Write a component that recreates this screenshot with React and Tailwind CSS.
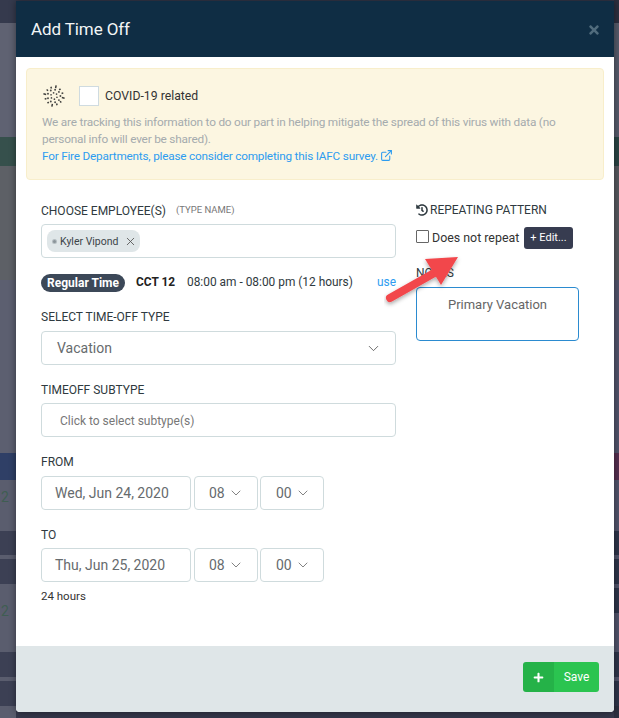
import React from 'react';
import { FaHistory, FaPlus, FaTimes } from 'react-icons/fa';
import { ChevronDown, ExternalLink, X } from 'lucide-react';

const leftBands = [
  [23, 'bg-[#353a4d]'], [114, 'bg-[#5f6272]'], [29, 'bg-[#36504c]'], [114, 'bg-[#5d6066]'], [173, 'bg-[#5c5f70]'],
  [27, 'bg-[#2f3f66]'], [51, 'bg-[#5a5d6e]', '2', 18], [24, 'bg-[#3c4054]'], [4, 'bg-[#5a5d6e]'], [25, 'bg-[#3c4054]'],
  [68, 'bg-[#5a5d6e]', '2', 28], [25, 'bg-[#3c4054]'], [4, 'bg-[#5a5d6e]'], [25, 'bg-[#3c4054]'], [12, 'bg-[#5a5d6e]'],
];

const rightBands = [
  [23, 'bg-[#2c2f3f]'], [114, 'bg-[#565a6a]'], [29, 'bg-[#2a4444]'], [114, 'bg-[#56585e]'], [173, 'bg-[#50536a]'],
  [27, 'bg-[#552f4f]'], [51, 'bg-[#50536a]'], [24, 'bg-[#2e3449]'], [4, 'bg-[#50536a]'], [25, 'bg-[#2e3449]'],
  [4, 'bg-[#50536a]'], [25, 'bg-[#2e3449]'], [39, 'bg-[#50536a]'], [25, 'bg-[#2e3449]'], [4, 'bg-[#50536a]'], [25, 'bg-[#2e3449]'], [12, 'bg-[#2b2e3e]'],
];

const Strip = ({ bands, className }) => (
  <div className={`flex flex-col shrink-0 overflow-hidden ${className}`}>
    {bands.map(([h, bg, text, top], i) => (
      <div key={i} className={`${bg} w-full shrink-0 relative`} style={{ height: h }}>
        {text && (
          <span className="block text-[14px] leading-none text-[#3f5d52] ml-px" style={{ marginTop: top - 8 }}>{text}</span>
        )}
      </div>
    ))}
  </div>
);

// coronavirus glyph: dotted ball with short spikes round the rim
const VirusIcon = () => {
  const parts = [];
  for (let i = 0; i < 12; i++) {
    const a = (i / 12) * Math.PI * 2 + 0.2;
    const r1 = 8;
    const r2 = i % 3 === 0 ? 10.8 : 9.8;
    parts.push(
      <line key={`s${i}`} x1={11 + r1 * Math.cos(a)} y1={11 + r1 * Math.sin(a)} x2={11 + r2 * Math.cos(a)} y2={11 + r2 * Math.sin(a)} stroke="#3c3c3a" strokeWidth="1.5" />
    );
  }
  [[6.4, 9, 0.95], [3.2, 6, 0.85]].forEach(([r, n, s], k) => {
    for (let i = 0; i < n; i++) {
      const a = (i / n) * Math.PI * 2 + k * 0.4;
      parts.push(<circle key={`${k}-${i}`} cx={11 + r * Math.cos(a)} cy={11 + r * Math.sin(a)} r={s} />);
    }
  });
  return (
    <svg width="22" height="22" viewBox="0 0 22 22" fill="#4a4a48" className="shrink-0">
      {parts}
    </svg>
  );
};

const Label = ({ children, className = '' }) => (
  <div className={`h-5 pt-px flex items-center text-[12px] text-[#2f3a40] ${className}`}>{children}</div>
);

const Box = ({ children, className = '' }) => (
  <div className={`h-[34px] flex items-center bg-white border border-[#cfdbdd] rounded-sm ${className}`}>
    {children}
  </div>
);

const TimeRow = ({ date, className = '' }) => (
  <div className={`flex text-[14px] text-[#666b6e] ${className}`}>
    <Box className="w-[150px] pl-[13px]">{date}</Box>
    <Box className="w-[64px] ml-[3px] pl-[14px] gap-[3px]">08<ChevronDown size={16} strokeWidth={1.1} className="text-[#555]" /></Box>
    <Box className="w-[64px] ml-[2px] pl-[15px] gap-[3px]">00<ChevronDown size={16} strokeWidth={1.1} className="text-[#555]" /></Box>
  </div>
);

export default function App() {
  return (
    <div className="flex w-[619px] h-[718px] overflow-hidden bg-[#34374a] font-['Roboto',sans-serif]">
      <Strip bands={leftBands} className="w-4" />

      <div className="w-[598px] h-[711px] mt-px flex flex-col bg-white rounded-b relative z-10 shadow-[0_0_7px_rgba(0,0,0,0.45)]">
        {/* Header */}
        <div className="h-14 shrink-0 bg-[#0f2d44] flex items-center justify-between px-[15px]">
          <h1 className="text-[17px] tracking-[-0.1px] text-[#f2f5f6] mt-0.5">Add Time Off</h1>
          <FaTimes size={14} className="text-[#516c7d] mt-0.5 -mr-[2px]" />
        </div>

        {/* Body */}
        <div className="flex-1 px-[10px] pt-[11px]">
          <div className="h-[112px] bg-[#fcf6e1] border border-[#f8eecb] rounded pl-[15px] pt-4">
            <div className="flex items-center h-[22px]">
              <span className="ml-px"><VirusIcon /></span>
              <div className="w-5 h-5 ml-[14px] bg-white border border-[#cfdbe0]" />
              <span className="ml-[6px] text-[12.25px] text-[#333]">COVID-19 related</span>
            </div>
            <p className="mt-[7px] text-[11.8px] tracking-[-0.2px] leading-[17px] text-[#a5abae] w-[530px]">
              We are tracking this information to do our part in helping mitigate the spread of this virus with data (no personal info will ever be shared).
            </p>
            <div className="flex items-center text-[11.75px] tracking-[-0.2px] leading-[17px] text-[#2d9cf0]">
              For Fire Departments, please consider completing this IAFC survey.
              <ExternalLink size={13} strokeWidth={2} className="ml-[2px] -mt-0.5" />
            </div>
          </div>

          <div className="flex pl-[15px] pt-5">
            {/* Left column */}
            <div className="w-[355px] shrink-0">
              <Label>
                CHOOSE EMPLOYEE(S)
                <span className="ml-[10px] text-[9.5px] text-[#777]">(TYPE NAME)</span>
              </Label>
              <Box className="mt-1 pl-[5px]">
                <div className="h-[22px] w-[93px] bg-[#dfe6e8] rounded-lg flex items-center pl-[5px] text-[10.5px] whitespace-nowrap text-[#3c4448]">
                  <span className="w-[3px] h-[3px] rounded-full bg-[#8a9499] ring-1 ring-[#8a9499]/50 mr-[4px] ml-px shrink-0" />
                  <span className="mt-0.5">Kyler Vipond</span>
                  <X size={13} strokeWidth={1.6} className="ml-[6px] text-[#555] shrink-0" />
                </div>
              </Box>

              <div className="mt-4 h-[18px] flex items-center text-[11.9px] text-[#2f3a40]">
                <span className="w-[84px] h-[18px] flex items-center justify-center rounded-full bg-[#3c4858] text-white font-bold text-[12px]">Regular Time</span>
                <span className="ml-[11px] w-[38px] whitespace-nowrap font-bold text-[#222]">CCT 12</span>
                <span className="ml-[13px]">08:00 am - 08:00 pm (12 hours)</span>
                <span className="ml-auto text-[#2d9cf0]">use</span>
              </div>

              <Label className="mt-[14px]">SELECT TIME-OFF TYPE</Label>
              <Box className="mt-[5px] pl-[15px] pr-[13px] justify-between text-[14px] text-[#666b6e]">
                Vacation
                <ChevronDown size={17} strokeWidth={1.1} className="text-[#444]" />
              </Box>

              <Label className="mt-[14px]">TIMEOFF SUBTYPE</Label>
              <Box className="mt-1 pl-[18px] pt-0.5 text-[12px] text-[#777]">Click to select subtype(s)</Box>

              <Label className="mt-[14px]">FROM</Label>
              <TimeRow date="Wed, Jun 24, 2020" className="mt-[5px]" />

              <Label className="mt-[14px]">TO</Label>
              <TimeRow date="Thu, Jun 25, 2020" className="mt-1" />

              <div className="mt-[7px] h-4 flex items-center text-[11.5px] text-[#333]">24 hours</div>
            </div>

            {/* Right column */}
            <div className="ml-5 w-[163px] shrink-0">
              <div className="h-[18px] pt-px flex items-center text-[12px] text-[#2f3a40]">
                <FaHistory size={12} className="mr-[2px]" />
                REPEATING PATTERN
              </div>
              <div className="mt-[9px] h-[22px] flex items-center whitespace-nowrap">
                <div className="w-[13px] h-[13px] border border-[#666] rounded-[1px] -mt-1 shrink-0" />
                <span className="ml-[3px] w-[88px] text-[12.4px] text-[#333]">Does not repeat</span>
                <span className="ml-1 w-[49px] h-[22px] shrink-0 flex items-center justify-center rounded-[3px] bg-[#373c50] text-white text-[11px]">+ Edit...</span>
              </div>
              <div className="mt-[15px] h-[18px] flex items-center text-[12px] text-[#2f3a40]">NOTES</div>
              <div className="mt-[5px] h-[54px] border border-[#2b8bd0] rounded-sm pt-[7px] text-center text-[13px] text-[#666]">
                Primary Vacation
              </div>
            </div>
          </div>
        </div>

        {/* Footer */}
        <div className="h-[66px] shrink-0 bg-[#dfe6e8] rounded-b flex justify-end pt-4 pr-[15px]">
          <div className="h-[30px] w-[76px] flex rounded-[3px] overflow-hidden text-white text-[12px]">
            <div className="w-[31px] bg-[#25b248] flex items-center justify-center"><FaPlus size={11} /></div>
            <div className="flex-1 bg-[#2bc450] flex items-center justify-center">Save</div>
          </div>
        </div>

        {/* annotation arrow drawn over the screenshot */}
        <svg width="90" height="60" viewBox="0 0 90 60" className="absolute left-[368px] top-[250px] pointer-events-none">
          <defs>
            <filter id="arrowShadow" x="-20%" y="-20%" width="140%" height="150%">
              <feDropShadow dx="0" dy="2" stdDeviation="2" floodColor="#000" floodOpacity="0.35" />
            </filter>
          </defs>
          <g filter="url(#arrowShadow)">
            <path d="M6 47 L52 21" stroke="#f2464b" strokeWidth="8" strokeLinecap="round" />
            <path d="M41 8 L74 6 L57 34 Z" fill="#f2464b" />
          </g>
        </svg>
      </div>

      <Strip bands={rightBands} className="w-[5px]" />
    </div>
  );
}
